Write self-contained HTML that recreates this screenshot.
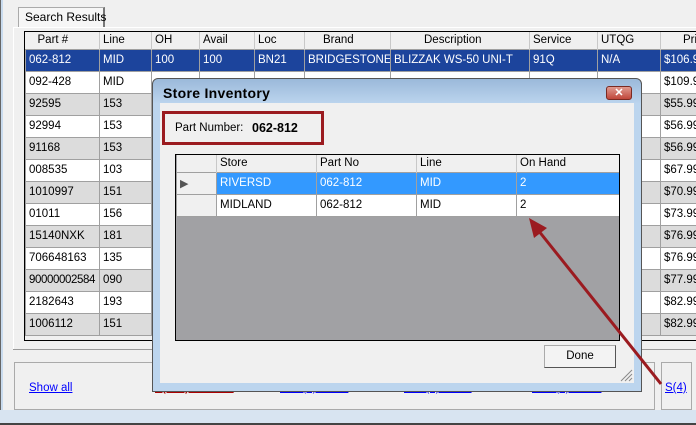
<!DOCTYPE html>
<html><head><style>
*{margin:0;padding:0;box-sizing:border-box}
body{width:696px;height:425px;overflow:hidden;background:#f0f0f0;font-family:"Liberation Sans",sans-serif;font-size:11.5px;position:relative;color:#000}
.a{position:absolute;white-space:nowrap}
table{border-collapse:collapse;table-layout:fixed}
td{border:1px solid #a0a0a0;padding:0 0 0 3px;white-space:nowrap;overflow:hidden;height:22px}
.g td{background:#fff}
.g tr:nth-child(odd) td{background:#dcdcdc}
.g tr.sel td{background:#1c449c;color:#fff}
.h td{background:#f0f0f0;height:17px;border-top:none;border-bottom:none;border-left:none;border-right:1px solid #c8c8c8}
a{color:#00f;text-decoration:underline}
</style></head><body>
<div class="a" style="left:0;top:0;width:3px;height:425px;background:#c9dbee;border-left:1px solid #666"></div>
<div class="a" style="left:0;top:410px;width:696px;height:15px;background:#d8e4f1;border-bottom:2px solid #444"></div>
<div class="a" style="left:18px;top:7px;width:87px;height:20px;border:1px solid #aaa;border-bottom:none;border-right:2px solid #777;background:#f6f6f6;padding:2px 0 0 6px;font-size:12px">Search Results</div>
<div class="a" style="left:13px;top:27px;width:683px;height:1px;background:#fff"></div>
<div class="a" style="left:13px;top:27px;width:1px;height:323px;background:#fff"></div>
<div class="a" style="left:13px;top:349px;width:683px;height:1px;background:#999"></div>
<div class="a" style="left:24px;top:31px;width:680px;height:310px;border:1px solid #000;overflow:hidden;background:#f0f0f0">
<table style="width:720px">
<colgroup><col style="width:74px"><col style="width:52px"><col style="width:48px"><col style="width:55px"><col style="width:50px"><col style="width:86px"><col style="width:139px"><col style="width:68px"><col style="width:63px"><col style="width:85px"></colgroup>
<tr class="h"><td style="padding-left:12px">Part #</td><td>Line</td><td>OH</td><td>Avail</td><td>Loc</td><td style="padding-left:18px">Brand</td><td style="padding-left:33px">Description</td><td>Service</td><td>UTQG</td><td style="padding-left:22px">Price</td></tr>
<tbody class="g">
<tr class="sel"><td>062-812</td><td>MID</td><td>100</td><td>100</td><td>BN21</td><td>BRIDGESTONE</td><td>BLIZZAK WS-50 UNI-T</td><td>91Q</td><td>N/A</td><td>$106.99</td></tr>
<tr><td>092-428</td><td>MID</td><td></td><td></td><td></td><td></td><td></td><td></td><td></td><td>$109.99</td></tr>
<tr><td>92595</td><td>153</td><td></td><td></td><td></td><td></td><td></td><td></td><td></td><td>$55.99</td></tr>
<tr><td>92994</td><td>153</td><td></td><td></td><td></td><td></td><td></td><td></td><td></td><td>$56.99</td></tr>
<tr><td>91168</td><td>153</td><td></td><td></td><td></td><td></td><td></td><td></td><td></td><td>$56.99</td></tr>
<tr><td>008535</td><td>103</td><td></td><td></td><td></td><td></td><td></td><td></td><td></td><td>$67.99</td></tr>
<tr><td>1010997</td><td>151</td><td></td><td></td><td></td><td></td><td></td><td></td><td></td><td>$70.99</td></tr>
<tr><td>01011</td><td>156</td><td></td><td></td><td></td><td></td><td></td><td></td><td></td><td>$73.99</td></tr>
<tr><td>15140NXK</td><td>181</td><td></td><td></td><td></td><td></td><td></td><td></td><td></td><td>$76.99</td></tr>
<tr><td>706648163</td><td>135</td><td></td><td></td><td></td><td></td><td></td><td></td><td></td><td>$76.99</td></tr>
<tr><td style="letter-spacing:-.4px">90000002584</td><td>090</td><td></td><td></td><td></td><td></td><td></td><td></td><td></td><td>$77.99</td></tr>
<tr><td>2182643</td><td>193</td><td></td><td></td><td></td><td></td><td></td><td></td><td></td><td>$82.99</td></tr>
<tr><td>1006112</td><td>151</td><td></td><td></td><td></td><td></td><td></td><td></td><td></td><td>$82.99</td></tr>
</tbody></table></div>
<div class="a" style="left:14px;top:362px;width:641px;height:48px;border:1px solid #aaa"></div>
<div class="a" style="left:661px;top:362px;width:31px;height:48px;border:1px solid #aaa"></div>
<a class="a" style="left:29px;top:382px">Show all</a>
<a class="a" style="left:155px;top:382px;color:#a00;font-weight:bold">L(100) $106.99</a>
<a class="a" style="left:280px;top:382px">STS(0) $0.00</a>
<a class="a" style="left:404px;top:382px">ATS(0) $0.00</a>
<a class="a" style="left:532px;top:382px">ATM(0) $0.00</a>
<a class="a" style="left:665px;top:382px">S(4)</a>
<!-- dialog -->
<div class="a" style="left:152px;top:78px;width:490px;height:314px;border:1px solid #555;border-radius:6px 6px 0 0;background:linear-gradient(#9bb9da,#bcd5ee 25px,#bcd5ee)"></div>
<div class="a" style="left:163px;top:85px;font-size:14px;font-weight:bold;letter-spacing:.3px">Store Inventory</div>
<div class="a" style="left:606px;top:86px;width:26px;height:14px;background:linear-gradient(#e09a90,#c0463a);border:1px solid #7a2a22;border-radius:3px;color:#fff;font-size:11px;font-weight:bold;text-align:center;line-height:12px">✕</div>
<div class="a" style="left:160px;top:103px;width:474px;height:280px;background:#f0f0f0"></div>
<div class="a" style="left:162px;top:111px;width:162px;height:34px;border:3px solid #9b1b20"></div>
<div class="a" style="left:175px;top:122px">Part Number:</div>
<div class="a" style="left:252px;top:121px;font-weight:bold;font-size:12.5px">062-812</div>
<div class="a" style="left:175px;top:154px;width:445px;height:187px;border:1px solid #000;background:#a1a1a4;overflow:hidden">
<table style="width:443px">
<colgroup><col style="width:40px"><col style="width:100px"><col style="width:100px"><col style="width:100px"><col style="width:103px"></colgroup>
<tr class="h"><td></td><td>Store</td><td>Part No</td><td>Line</td><td>On Hand</td></tr>
<tr><td style="background:#f0f0f0;height:21px;color:#555;font-size:11px">&#9654;</td><td style="background:#3399ff;color:#fff">RIVERSD</td><td style="background:#3399ff;color:#fff">062-812</td><td style="background:#3399ff;color:#fff">MID</td><td style="background:#3399ff;color:#fff">2</td></tr>
<tr><td style="background:#f0f0f0;height:21px"></td><td style="background:#fff">MIDLAND</td><td style="background:#fff">062-812</td><td style="background:#fff">MID</td><td style="background:#fff">2</td></tr>
</table></div>
<div class="a" style="left:544px;top:345px;width:72px;height:23px;border:1px solid #aaa;border-right-color:#555;border-bottom-color:#555;background:#f3f3f3;text-align:center;line-height:20px">Done</div>
<svg class="a" style="left:0;top:0" width="696" height="425">
<g stroke="#888" stroke-width="1"><line x1="621" y1="381" x2="632" y2="370"/><line x1="625" y1="381" x2="632" y2="374"/><line x1="629" y1="381" x2="632" y2="378"/></g>
<line x1="661" y1="384" x2="538" y2="230" stroke="#9b1b20" stroke-width="3"/>
<polygon points="529,218 547,228 534,238" fill="#9b1b20"/>
</svg>
</body></html>
